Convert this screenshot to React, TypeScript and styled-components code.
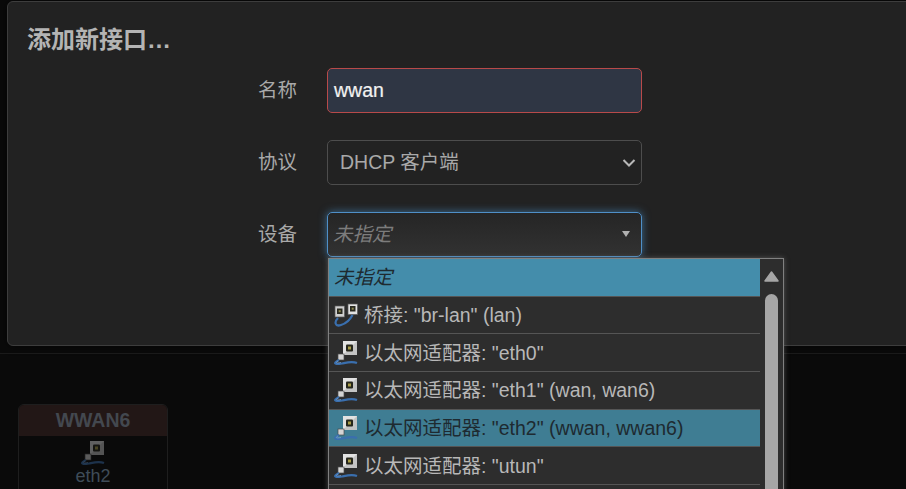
import { createGlobalStyle, styled } from 'styled-components';

const Global = createGlobalStyle`
  html, body {
    margin: 0;
    padding: 0;
    height: 489px;
    overflow: hidden;
    background: #0a0a0a;
    font-family: 'Liberation Sans', 'Noto Sans CJK SC', sans-serif;
  }
`;

const Page = styled.div`
  height: 489px;
  overflow: hidden;
  padding-top: 1px;
  box-sizing: border-box;
`;

const Modal = styled.div`
  box-sizing: border-box;
  height: 345px;
  margin-left: 7px;
  width: 960px;
  padding: 24px 19px 0;
  background: #222222;
  border: 1px solid #3d3d3d;
  border-radius: 6px;
  box-shadow: 0 0 8px rgba(0, 0, 0, 0.6);
`;

const Title = styled.h4`
  margin: 0 0 15px;
  height: 27px;
  font-size: 24px;
  line-height: 27px;
  font-weight: 700;
  color: #b4b4b4;
`;

const Row = styled.div`
  display: flex;
  align-items: center;
  height: 45px;
  margin-bottom: 27px;
`;

const Label = styled.label`
  width: 270px;
  text-align: right;
  margin-right: 30px;
  padding-bottom: 5px;
  font-size: 19.5px;
  color: #a9a9a9;
`;

const Field = styled.div`
  position: relative;
  box-sizing: border-box;
  width: 315px;
  height: 45px;
  border-radius: 5px;
  display: flex;
  align-items: center;
  font-size: 19.5px;
`;

const NameInput = styled(Field)`
  background: #2f3644;
  border: 1px solid #b84a4a;
  padding-left: 6px;
  color: #f2f2f2;
  -webkit-text-stroke: 0.2px #f2f2f2;
`;

const SelectBox = styled(Field)`
  background: #222222;
  border: 1px solid #4d4d4d;
  padding: 0 0 4px 12px;
  color: #a9a9a9;
  justify-content: space-between;
`;

const Chevron = styled.svg`
  width: 16px;
  height: 16px;
  margin: 4px 4px 0 0;
`;

const Combo = styled(Field)`
  background: linear-gradient(#252525, #323232);
  border: 1px solid #4f8fc7;
  box-shadow: 0 0 8px rgba(82, 168, 236, 0.55);
  padding: 0 0 0 5px;
  color: #7c7c7c;
  font-style: italic;
`;

const ComboText = styled.span`
  padding-bottom: 5px;
`;

const ComboCaret = styled.span`
  position: absolute;
  right: 11px;
  top: 18px;
  width: 0;
  height: 0;
  border-left: 4px solid transparent;
  border-right: 4px solid transparent;
  border-top: 6.5px solid #b0b0b0;
`;

const Dropdown = styled.div`
  position: absolute;
  left: 0;
  top: 45px;
  box-sizing: border-box;
  width: 456px;
  height: 300px;
  display: flex;
  background: #2d2d2d;
  border: 1px solid #808080;
  box-shadow: 0 0 5px rgba(130, 130, 130, 0.55);
  font-style: normal;
`;

const List = styled.ul`
  list-style: none;
  margin: 0;
  padding: 0;
  width: 431px;
  flex: none;
`;

const Item = styled.li<{ $tone?: 'plain' | 'first' | 'hover' }>`
  box-sizing: border-box;
  height: 37.7px;
  display: flex;
  align-items: center;
  gap: 6px;
  padding: 0 0 3px 5px;
  border-bottom: 1px solid #555555;
  font-size: 19.5px;
  white-space: nowrap;
  background: ${(p) =>
    p.$tone === 'first' ? '#448dab' : p.$tone === 'hover' ? '#3f7d93' : 'transparent'};
  color: ${(p) => (p.$tone === 'first' || p.$tone === 'hover' ? '#1e2a30' : '#b8b8b8')};
  font-style: ${(p) => (p.$tone === 'first' ? 'italic' : 'normal')};
`;

const Scrollbar = styled.div`
  position: relative;
  flex: 1;
`;

const ScrollUp = styled.svg`
  position: absolute;
  left: 4px;
  top: 12px;
  width: 15px;
  height: 11px;
`;

const Thumb = styled.div`
  position: absolute;
  left: 5px;
  top: 35px;
  width: 13px;
  height: 260px;
  border-radius: 7px 7px 0 0;
  background: #a6a6a6;
`;

const Divider = styled.div`
  height: 1px;
  margin-top: 7px;
  background: #1a1a1a;
`;

const Card = styled.div`
  box-sizing: border-box;
  width: 150px;
  height: 120px;
  margin: 50px 0 0 18px;
  border: 1px solid #1e1e1e;
  border-radius: 6px 6px 0 0;
  text-align: center;
`;

const CardHead = styled.div`
  height: 31px;
  line-height: 30px;
  background: #221716;
  border-radius: 5px 5px 0 0;
  font-size: 19.5px;
  font-weight: 700;
  color: #43484f;
`;

const CardBody = styled.div`
  display: flex;
  flex-direction: column;
  align-items: center;
  padding-top: 5px;
  font-size: 18px;
  line-height: 22px;
  color: #3f4c58;
`;

const DimIcon = styled.svg`
  width: 24px;
  height: 24px;
  opacity: 0.4;
`;

const PortIcon = styled.svg`
  width: 24px;
  height: 24px;
  flex: none;
  margin-top: 3px;
`;

function EthernetGlyph() {
  return (
    <>
      <rect x="9" y="0" width="14" height="14" fill="#e2e2e2" />
      <path d="M9 14 L23 0 V14 Z" fill="#c4c4c4" />
      <rect x="12" y="3.5" width="7" height="7" rx="1" fill="#26261c" />
      <rect x="14" y="5.5" width="3" height="3" fill="#a89c48" />
      <rect x="4" y="13" width="6" height="6" fill="#d4d4d4" stroke="#4a4a4a" strokeWidth="0.7" />
      <path d="M5 19 C-1 22 0 24 8 22.5 C13 21.5 18 20 23 22" fill="none" stroke="#3a6fae" strokeWidth="2.2" />
      <path d="M4 20 C1 21.5 2 22.5 7 21.5" fill="none" stroke="#7fa8d6" strokeWidth="0.7" />
    </>
  );
}

function BridgeGlyph() {
  return (
    <>
      <rect x="1" y="3" width="9.5" height="11" fill="#cfcfcf" stroke="#5a5a5a" strokeWidth="0.7" />
      <rect x="3" y="5.5" width="5.5" height="5.5" fill="#2a2a20" />
      <rect x="4.7" y="7.2" width="2" height="2" fill="#8f8a52" />
      <rect x="14" y="1" width="9.5" height="10.5" fill="#e2e2e2" stroke="#5a5a5a" strokeWidth="0.7" />
      <rect x="16" y="3" width="5.5" height="5.5" fill="#2a2a20" />
      <rect x="17.7" y="4.7" width="2" height="2" fill="#8f8a52" />
      <path d="M4 15 C0 19 1 24 7 22 C12 20.5 16 17 18.5 12" fill="none" stroke="#3a6fae" strokeWidth="2.2" />
    </>
  );
}

const ports = [
  { label: '以太网适配器: "eth0"' },
  { label: '以太网适配器: "eth1" (wan, wan6)' },
  { label: '以太网适配器: "eth2" (wwan, wwan6)', tone: 'hover' as const },
  { label: '以太网适配器: "utun"' },
];

export default function App() {
  return (
    <Page>
      <Global />
      <Modal>
        <Title>添加新接口…</Title>
        <Row>
          <Label>名称</Label>
          <NameInput>wwan</NameInput>
        </Row>
        <Row>
          <Label>协议</Label>
          <SelectBox>
            DHCP 客户端
            <Chevron viewBox="0 0 16 16">
              <path d="M2.5 5l5.5 5.5 5.5-5.5" fill="none" stroke="#b8b8b8" strokeWidth="2" />
            </Chevron>
          </SelectBox>
        </Row>
        <Row>
          <Label>设备</Label>
          <Combo>
            <ComboText>未指定</ComboText>
            <ComboCaret />
            <Dropdown>
              <List>
                <Item $tone="first">未指定</Item>
                <Item>
                  <PortIcon viewBox="0 0 24 24">
                    <BridgeGlyph />
                  </PortIcon>
                  桥接: "br-lan" (lan)
                </Item>
                {ports.map(({ label, tone }) => (
                  <Item key={label} $tone={tone}>
                    <PortIcon viewBox="0 0 24 24">
                      <EthernetGlyph />
                    </PortIcon>
                    {label}
                  </Item>
                ))}
              </List>
              <Scrollbar>
                <ScrollUp viewBox="0 0 15 11">
                  <path d="M7.5 1 L14 10 H1 Z" fill="#a6a6a6" stroke="#a6a6a6" strokeWidth="1.5" strokeLinejoin="round" />
                </ScrollUp>
                <Thumb />
              </Scrollbar>
            </Dropdown>
          </Combo>
        </Row>
      </Modal>
      <Divider />
      <Card>
        <CardHead>WWAN6</CardHead>
        <CardBody>
          <DimIcon viewBox="0 0 24 24">
            <EthernetGlyph />
          </DimIcon>
          eth2
        </CardBody>
      </Card>
    </Page>
  );
}
